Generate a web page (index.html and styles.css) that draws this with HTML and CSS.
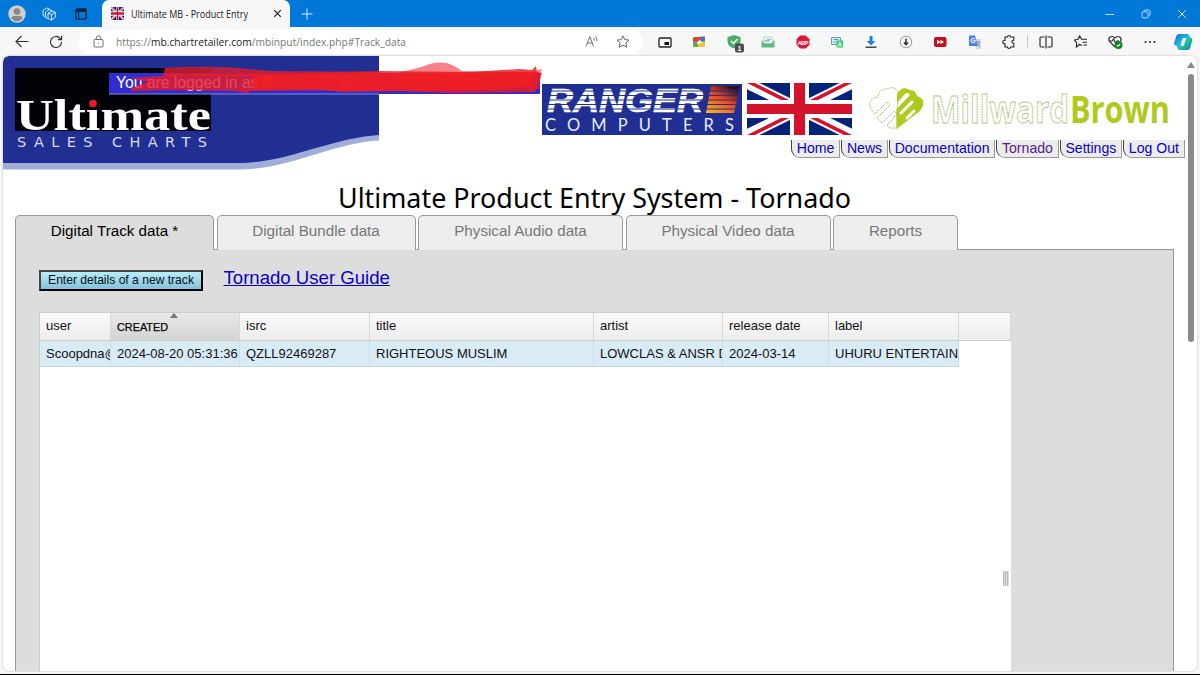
FILE: index.html
```html
<!DOCTYPE html>
<html lang="en">
<head>
<meta charset="utf-8">
<title>Ultimate MB - Product Entry</title>
<link rel="stylesheet" href="styles.css">
</head>
<body>
<svg class="defs" width="0" height="0">
  <defs>
    <symbol id="flag" viewBox="0 0 105 52" preserveAspectRatio="none">
      <path fill="#012379" d="M0 0h105v52H0z"/>
      <path stroke="#fff" stroke-width="11" d="M0 0 105 52M105 0 0 52"/>
      <path fill="#d3122d" d="M0 0l35 17.5h8L8 0zM105 0 70 17.500h-8L97 0zM105 52 70 34.500h-8L97 52zM0 52l35-17.500h8L8 52z"/>
      <path fill="#fff" d="M43 0h19v52H43zM0 17h105v18H0z"/>
      <path fill="#d3122d" d="M47 0h11v52H47zM0 21h105v10H0z"/>
    </symbol>
    <linearGradient id="flame" x1="0" y1="1" x2="0.700" y2="0"><stop offset="0" stop-color="#ffc01e"/><stop offset=".6" stop-color="#e8441f"/><stop offset="1" stop-color="#2a1020"/></linearGradient>
    <linearGradient id="cop" x1="0" y1="0" x2="1" y2="1"><stop offset="0" stop-color="#1766c9"/><stop offset=".45" stop-color="#27b5e8"/><stop offset=".6" stop-color="#21c58b"/><stop offset="1" stop-color="#1473d0"/></linearGradient>
  </defs>
</svg>

<header class="titlebar">
  <div class="titlebar-left">
    <svg width="18" height="18" viewBox="0 0 18 18"><circle cx="9" cy="9" r="8.700" fill="#d2d0ce"/><circle cx="9" cy="6.500" r="3.300" fill="#8a8886"/><path d="M3.500 13.500q0-2.500 2.500-2.500h6q2.500 0 2.500 2.500-2.200 2.700-5.500 2.700t-5.500-2.700z" fill="#8a8886"/></svg>
    <svg width="14" height="14" viewBox="0 0 14 14" fill="none" stroke="#d9ecff" stroke-width="1"><path d="M1 3.500 4.500 1l3 1M1 3.500v5l2 1M3.500 5 7 2.500l3 1M3.500 5v5.500l2 1M6 6.200 10 4l3.300 1.300v5L9.500 13 6 11.500zL9.500 7.500 13.300 5.300M9.500 7.500V13"/></svg>
    <svg width="12" height="12" viewBox="0 0 12 12"><rect x=".8" y=".8" width="10.400" height="10.400" rx="1.500" fill="none" stroke="#06233f" stroke-width="1.300"/><path d="M1 1h10v3H1zM3.200 4h1v7h-1z" fill="#06233f"/></svg>
  </div>
  <div class="browser-tab">
    <svg class="tab-flag" width="13" height="13"><use href="#flag" width="13" height="13"/></svg>
    <svg class="tab-title" width="118" height="18"><text x="0" y="12.500" textLength="117" lengthAdjust="spacingAndGlyphs">Ultimate MB - Product Entry</text></svg>
    <svg width="9" height="9" viewBox="0 0 9 9" stroke="#222" stroke-width="1.200"><path d="M1.200 1.200l6.600 6.600M7.800 1.200 1.200 7.800"/></svg>
  </div>
  <svg class="new-tab" width="12" height="12" viewBox="0 0 12 12" stroke="#d5eaff" stroke-width="1"><path d="M6 .5v11M.5 6h11"/></svg>
  <div class="window-buttons">
    <svg width="10" height="10" viewBox="0 0 10 10" stroke="#c4e2fb"><path d="M.5 5.500h8.500"/></svg>
    <svg width="10" height="10" viewBox="0 0 10 10" fill="none" stroke="#c4e2fb" stroke-width=".9"><rect x="1" y="2.800" width="6" height="6" rx="1"/><path d="M3 2.500V2q0-1 1-1h3.500q1.500 0 1.500 1.500V6q0 1-1.200 1"/></svg>
    <svg width="10" height="10" viewBox="0 0 10 10" stroke="#d5eaff"><path d="M1 1l8 8M9 1 1 9"/></svg>
  </div>
</header>

<div class="toolbar">
  <div class="nav-icons">
    <svg width="14" height="13" viewBox="0 0 14 13" fill="none" stroke="#333" stroke-width="1.100"><path d="M13.500 6.500H1M6.500 1 1 6.500 6.500 12"/></svg>
    <svg width="14" height="14" viewBox="0 0 14 14" fill="none" stroke="#333" stroke-width="1.200"><path d="M12.500 7A5.500 5.500 0 1 1 11 3.200L12.500 4.500M12.600.8v3.800H8.800"/></svg>
  </div>
  <div class="address">
    <svg width="11" height="13" viewBox="0 0 11 13" fill="none" stroke="#707070"><rect x="1" y="4.500" width="9" height="7.500" rx="1"/><path d="M3.200 4.500V3Q3.200.8 5.500.8T7.800 3v1.500"/><circle cx="5.500" cy="8.200" r=".6" fill="#707070" stroke="none"/></svg>
    <svg class="url" width="291" height="20"><text x="0" y="13.500" textLength="290" lengthAdjust="spacingAndGlyphs">https://<tspan class="host">mb.chartretailer.com</tspan>/mbinput/index.php#Track_data</text></svg>
    <svg class="read" width="14" height="13" viewBox="0 0 14 13" fill="none" stroke="#707070"><path d="M1 11.500 4.800 1.500 8.600 11.500M2.400 8h4.800M8.500 3q1 1 .8 2.500M10.300 1.500q1.800 1.500 1.500 4.500"/></svg>
    <svg width="14" height="13" viewBox="0 0 14 13" fill="none" stroke="#666"><path d="M7 .8 8.800 4.600 13 5.100 9.900 8l.8 4.200L7 10.200l-3.700 2L4.100 8 1 5.100l4.200-.5z"/></svg>
  </div>
  <div class="extensions">
    <svg viewBox="0 0 16 16"><rect x="2" y="4" width="12" height="9" rx="1" fill="none" stroke="#222" stroke-width="1.300"/><path fill="#111" d="M7.500 8h4.500v3H7.500z"/></svg>
    <svg viewBox="0 0 16 16"><path fill="#df4038" d="M3.500 3H10v5H2V4.500Q2 3 3.500 3z"/><path fill="#62a94d" d="M2 7.500h5V13H3.500Q2 13 2 11.500z"/><path fill="#f1bd31" d="M7 7h7v4.500q0 1.500-1.500 1.500H7z"/><path fill="#4775ce" d="M9.500 2.500H14V7.500H9.500z"/><path fill="#fff" d="M5.500 9 9.500 5.500v2.500h3.500L8 10z"/></svg>
    <svg viewBox="0 0 16 16"><path fill="#4dac6d" d="M8 1l6.500 2v4.500q0 4.500-6.500 7-6.500-2.500-6.500-7V3z"/><path d="M5 7l2.500 2.500L11.500 5" fill="none" stroke="#fff" stroke-width="1.400"/><rect x="9" y="9.500" width="9" height="9" rx="2" fill="#4c4c4c"/><text class="badge-text" x="11.500" y="17">1</text></svg>
    <svg viewBox="0 0 16 16"><path fill="#e6f3eb" stroke="#9ed0b0" stroke-width=".6" d="M3.500 3h9v7h-9z"/><path fill="#5cb780" d="M1.500 6l3 3.500h7l3-3.500v7.500h-13z"/><path d="M4.500 6l1.500 1.500L8.500 5M7.500 7.500 10.500 5" fill="none" stroke="#518dcb"/></svg>
    <svg viewBox="0 0 16 16"><path fill="#df1736" d="M5.200 1.500h5.600l3.700 3.700v5.600l-3.700 3.700H5.200l-3.700-3.700V5.200z"/><text class="abp-text" x="2.500" y="10.500" textLength="11">ABP</text></svg>
    <svg viewBox="0 0 16 16"><path d="M2.500 3.500h9v7h-9zM4.500 5.500h5M4.500 8h3" fill="#dceaf4" stroke="#5c9bd0"/><path fill="#3cc96f" d="M7.500 6.500H14V13.500H7.500z"/><path d="M9 12.500 10.800 8l1.800 4.500M9.500 11.200h2.600" fill="none" stroke="#fff" stroke-width=".8"/></svg>
    <svg viewBox="0 0 16 16"><path fill="#1784e8" d="M6.500 2h3v5h3L8 11.500 3.500 7h3z"/><path stroke="#333" stroke-width="1.400" d="M2.500 13.200h11"/></svg>
    <svg viewBox="0 0 16 16" fill="none"><circle cx="8" cy="8" r="5.800" stroke="#999"/><path d="M8 4.500v5.500M6 8.500l2 2.200 2-2.200" stroke="#333" stroke-width="1.500"/></svg>
    <svg viewBox="0 0 16 16"><rect x="2" y="3" width="12.500" height="10" rx="2" fill="#c90c1d"/><path fill="#fff" d="M5 5.800 8.500 8 5 10.200zM8.500 5.800 12 8l-3.500 2.200z"/></svg>
    <svg viewBox="0 0 16 16"><path fill="#d3d8df" d="M7 5h7v10H9z"/><path fill="#4b84e5" d="M2 1.500h6L11 12H2z"/><text class="g-text" x="3.200" y="9">G</text><path d="M9.500 8H13M11.500 7v1M12.500 8q-.5 2.500-2 4M10 9.500l3 2.500" fill="none" stroke="#7a8798" stroke-width=".8"/></svg>
    <svg viewBox="0 0 16 16" fill="none" stroke="#222" stroke-width="1.100"><path d="M4 3h2.500q0-1.500 1.500-1.500T9.500 3h3.300v3.200q-2 0-2 1.500t2 1.500v3.800H9.500Q9.500 14.500 8 14.500T6.500 13H4V9.800q-2.200 0-2.200-1.800T4 6.300z"/></svg>
  </div>
  <i class="divider"></i>
  <div class="browser-tools">
    <svg viewBox="0 0 16 16" fill="none" stroke="#222" stroke-width="1.100"><path d="M6.500 3H3.200Q2 3 2 4.200v7.600Q2 13 3.200 13h3.300M9.500 3h3.300Q14 3 14 4.200v7.600Q14 13 12.800 13H9.500M8 1.500v13"/></svg>
    <svg viewBox="0 0 16 16" fill="none" stroke="#222" stroke-width="1.100"><path d="M9 11.500 6.500 10.500 3.300 13l.4-4L1.500 6l3.500-.7L6.700 2l1.800 3.300h5.500M9.500 8.200H14M10.500 11H14"/></svg>
    <svg viewBox="0 0 16 16" fill="none" stroke="#222" stroke-width="1.100"><path d="M8 13 2.500 7.500Q1 5 2.800 3.200 5.500 1.500 8 4q2.500-2.500 5-.8Q15 5 13.500 7.500M2 7h3l1.500-2 2 4 1.500-2h2"/><circle cx="11.500" cy="11" r="4" fill="#108018" stroke="none"/><path d="M9.800 11l1.300 1.300 2.200-2.500" stroke="#fff"/></svg>
    <svg viewBox="0 0 16 16" fill="#222"><circle cx="3.500" cy="8" r="1"/><circle cx="8" cy="8" r="1"/><circle cx="12.500" cy="8" r="1"/></svg>
    <svg class="copilot" viewBox="0 0 20 18"><path fill="url(#cop)" d="M6 1h8q2 0 2.500 2l.5 1.500q2.500.2 2.200 3L17.500 14q-.7 3-3.200 3H7q-2 0-2.500-2L4 13q-3-.3-3-3L3 4q.7-3 3-3z"/><path fill="#f4fbff" d="M10.500 5h2.800L11 12q-.3 1-1.500 1H7.500l1.800-6.500q.3-1.500 1.200-1.500z"/></svg>
  </div>
</div>

<div class="window">
 <main class="page">
  <div class="site-header">
    <div class="banner">
      <svg width="541" height="116" viewBox="3 56 541 116">
        <path fill="#a1add9" d="M3 100h376v40.500c-44 2-91 29-139 29H3z"/>
        <path fill="#202f91" d="M3 62q0-6 6-6h370v79c-48 3-93 28-139 28H3z"/>
        <path fill="#010308" d="M15 68h196v63H15z"/>
        <text class="brand" x="16" y="130" textLength="195" lengthAdjust="spacingAndGlyphs">Ultimate</text>
        <circle cx="93" cy="103.500" r="6.500" fill="#010308"/><circle cx="93" cy="103.500" r="3.800" fill="#ee1c25"/>
        <text class="brand-sub" x="17" y="146.500" textLength="190">SALES CHARTS</text>
        <path fill="#312bd0" d="M109 73h431v21H109z"/><path fill="#8090d4" d="M109 93.500h270v1H109z"/>
        <text class="login" x="116" y="87.500">You are logged in as S</text>
        <text class="login" x="339" y="87.500">@</text>
        <path fill="#ed1c24" opacity=".55" d="M400 72q20-4 30-8 14-4 26 3l6 4 68 1 12-3-2 5v15H400z"/>
        <path fill="#d41f35" opacity=".85" d="M165 68q48-3 84 1l25 2 105 1v4H163z"/>
        <path fill="#e81c27" opacity=".82" d="M163 76l4-2 83 0 130-3 90 1 50-3 12 1 4-4 1 6 5 1-4 14-3 5-85 1-50-2-44-1-106 1-2 2-14-2-70-1-28 1q-6 1-5-3 12-4 16-6l-17-4z"/>
        <path fill="#f01e25" opacity=".85" d="M255 75l245-3 34 0-2 15-40 3-90 1-60 1-30-3-60 1z"/>
      </svg>
    </div>
    <div class="header-right">
      <div class="logos">
        <svg class="ranger" width="200" height="51" viewBox="542 84 200 51">
          <path fill="#202f91" d="M542 84h200v51H542z"/>
          <text class="ranger-text" x="547" y="112" textLength="156" lengthAdjust="spacingAndGlyphs">RANGER</text>
          <path fill="url(#flame)" d="M711 86h29l-6 27h-28z"/>
          <path stroke="#202f91" stroke-width="1.200" d="M545 91h196M545 95.500h196M545 100h196M545 104.500h196M545 109h196"/>
          <text class="computers" x="545" y="130.500" textLength="189">COMPUTERS</text>
        </svg>
        <svg class="flag" width="105" height="52"><use href="#flag" width="105" height="52"/></svg>
        <svg class="millward" width="304" height="50" viewBox="868 84 304 50">
          <path fill="#fff" stroke="#a6bd70" stroke-dasharray="2 1" d="M890 128l-3-3 10-11-3-3-12 12-5-5 13-13-3-3-12 12q-6-6-5-11 2-6 8-6 1-8 9-8 8-4 12 5l-2 15v19z"/>
          <path fill="#b0c91d" d="M896.500 129V109L910 95q-3-4-6 0l-7 8v-9q5-9 13-4 6 0 7 6 8 2 6 10l-3 5z"/>
          <path fill="none" stroke="#fff" stroke-width="3" stroke-linecap="round" d="M901 113l11-11M907 118l7-7"/>
          <text class="mill" x="931" y="122.500" textLength="138" lengthAdjust="spacingAndGlyphs">Millward</text>
          <text class="brown" x="1070" y="122.500" textLength="100" lengthAdjust="spacingAndGlyphs">Brown</text>
        </svg>
      </div>
      <nav class="site-nav">
        <a>Home</a><a>News</a><a>Documentation</a><a class="visited">Tornado</a><a>Settings</a><a>Log Out</a>
      </nav>
    </div>
  </div>
  <h1 class="page-title"><svg width="514" height="44"><text x="0" y="36" textLength="513" lengthAdjust="spacingAndGlyphs">Ultimate Product Entry System - Tornado</text></svg></h1>
  <div class="tabs">
    <div class="tab active">Digital Track data *</div>
    <div class="tab">Digital Bundle data</div>
    <div class="tab">Physical Audio data</div>
    <div class="tab">Physical Video data</div>
    <div class="tab">Reports</div>
  </div>
  <section class="panel">
    <div class="actions"><button class="new-track">Enter details of a new track</button><a class="guide">Tornado User Guide</a></div>
    <div class="table">
      <div class="row head">
        <div>user</div><div class="sorted"><svg width="52" height="27"><text x="0" y="17.500" textLength="51" lengthAdjust="spacingAndGlyphs">CREATED</text></svg><i class="sort-arrow"></i></div><div>isrc</div><div>title</div><div>artist</div><div>release date</div><div>label</div><div></div>
      </div>
      <div class="row data">
        <div>Scoopdna@</div><div>2024-08-20 05:31:36</div><div>QZLL92469287</div><div>RIGHTEOUS MUSLIM</div><div>LOWCLAS &amp; ANSR D</div><div>2024-03-14</div><div>UHURU ENTERTAINMENT</div>
      </div>
      <i class="grip"></i>
    </div>
  </section>
 </main>
 <div class="scrollbar"><i class="up"></i><i class="thumb"></i></div>
</div>
</body>
</html>
```
FILE: styles.css
```css
* { box-sizing: border-box; }
body { margin: 0; width: 1200px; height: 675px; overflow: hidden; display: flex; flex-direction: column; background: #f7f7f7; font-family: "Liberation Sans", Arial, sans-serif; border-bottom: 1px solid #000; }
svg { display: block; flex: none; overflow: visible; }
.defs { position: absolute; }

/* Browser chrome */
.titlebar { height: 27px; flex: none; display: flex; align-items: center; background: #0078d7; }
.titlebar-left { width: 102px; display: flex; align-items: center; padding-left: 8px; gap: 16px; }
.titlebar-left svg:last-child { margin-left: 3px; }
.browser-tab { width: 188px; height: 27px; display: flex; align-items: center; padding-left: 9px; background: #f7f7f7; border-radius: 7px 7px 0 0; }
.tab-title { margin: 0 24px 0 7px; font: 10px "Open Sans", sans-serif; fill: #222; }
.new-tab { margin-left: 11px; }
.window-buttons { margin-left: auto; display: flex; gap: 26px; padding-right: 13px; }
.toolbar { height: 29px; flex: none; display: flex; align-items: center; background: #f7f7f7; }
.nav-icons { width: 78px; display: flex; gap: 20px; padding-left: 15px; align-items: center; }
.address { width: 565px; height: 24px; border-radius: 12px; background: #fff; display: flex; align-items: center; padding: 0 13px 0 15px; }
.url { margin: 0 auto 0 12px; font: 11px "Open Sans", sans-serif; fill: #777; }
.host { fill: #222; }
.read { margin-right: 17px; }
.extensions { display: flex; margin-left: 14px; gap: 18.400px; }
.extensions svg, .browser-tools svg { width: 16px; height: 16px; }
.badge-text { font: bold 7px "Liberation Sans", sans-serif; fill: #fff; }
.abp-text { font: bold 6px "Liberation Sans", sans-serif; fill: #fff; }
.g-text { font: bold 7px "Liberation Sans", sans-serif; fill: #fff; }
.divider { width: 1px; height: 13px; margin-left: 10px; background: #c8c8c8; }
.browser-tools { display: flex; align-items: center; margin-left: 10px; gap: 18.700px; }
.browser-tools .copilot { width: 20px; height: 18px; margin-left: -4px; }

/* Browser viewport */
.window { flex: none; width: 1194px; height: 615px; margin-left: 3px; display: flex; overflow: hidden; background: #fff; border-radius: 6px; box-shadow: 0 0 1px 1px #ddd; }
.page { width: 1182px; }
.site-header { height: 122px; display: flex; }
.banner { width: 539px; flex: none; }
.header-right { width: 645px; flex: none; padding-top: 27px; }
.logos { height: 57px; display: flex; align-items: flex-start; }
.ranger { margin-top: 1px; }
.flag { margin-left: 5px; }
.millward { margin: 1px 0 0 16px; }
.brand { font: bold 44px "Liberation Serif", serif; fill: #fff; }
.brand-sub { font: 14.500px "DejaVu Sans", sans-serif; fill: #d6dcf3; }
.login { font: 15.700px "Liberation Sans", sans-serif; fill: #fff; }
.ranger-text { font: italic bold 34px "Liberation Sans", sans-serif; fill: #fff; stroke: #fff; stroke-width: .6px; }
.computers { font: 16.500px Lato, sans-serif; fill: #e8ecff; }
.mill { font: bold 37px "Open Sans", sans-serif; fill: #fff; stroke: #a0b868; stroke-width: .9px; stroke-dasharray: 2 .6; }
.brown { font: bold 37px "Open Sans", sans-serif; fill: #b0c91d; }
.site-nav { display: flex; justify-content: flex-end; padding-right: 2px; gap: 1px; font-size: 14.100px; color: #0a00c4; }
.site-nav a { height: 18px; line-height: 17px; padding: 0 5px 0 4.500px; background: #ececec; border: solid #999; border-width: 0 1px 1px 0; border-left: 1px solid #444; border-bottom-left-radius: 9px; white-space: nowrap; }
.site-nav .visited { color: #551a8b; }
.page-title { margin: 0; height: 37px; display: flex; justify-content: center; font: 26.500px "Noto Sans", sans-serif; }
.page-title svg { margin: -6px 0 0 1px; }

/* Tabs and data panel */
.tabs { height: 34px; display: grid; grid-template-columns: 199px 199px 205px 205px 125px; gap: 2.500px; margin-left: 12px; }
.tab { padding-top: 6px; line-height: 18px; text-align: center; font-size: 15.200px; color: #777; background: #eee; border: 1px solid #999; border-bottom: 0; border-radius: 5px 5px 0 0; white-space: nowrap; }
.tab.active { color: #000; background: #ddd; height: 35px; z-index: 1; }
.panel { width: 1159px; height: 430px; margin-left: 12px; padding: 13px 0 0 23px; background: #ddd; border: 1px solid #999; }
.actions { display: flex; gap: 20.500px; height: 49px; }
.new-track { width: 164px; height: 21px; margin-top: 7px; padding: 0; font: 12.100px/17px "Liberation Sans", sans-serif; white-space: nowrap; color: #021018; border: 2px outset #333; border-color: #444 #111 #111 #444; background: linear-gradient(#b9edf9, #85bfda); }
.guide { font-size: 18.600px; line-height: 29px; color: #0a00c4; text-decoration: underline; }
.table { position: relative; width: 972px; height: 365px; background: #fff; border-left: 1px solid #ccc; border-top: 1px solid #ccc; font-size: 13px; color: #111; }
.row { display: grid; grid-template-columns: 71px 129px 130px 224px 129px 106px 130px 52px; }
.row > div { overflow: hidden; white-space: nowrap; padding-left: 6px; line-height: 26px; border-right: 1px solid #d8d8d8; }
.head > div { height: 27px; background: linear-gradient(#fafafa, #ededed); }
.head { border-bottom: 1px solid #ccc; }
.head > .sorted { position: relative; font-size: 10.200px; background: linear-gradient(#e8e8e8, #d5d5d5); }
.sorted text { stroke: #111; stroke-width: .25px; }
.sort-arrow { position: absolute; top: 0; left: 59px; border: 4px solid transparent; border-top: 0; border-bottom: 5px solid #777; }
.data > div { height: 26px; background: #d9ebf5; border-right-color: #cbdde7; border-bottom: 1px solid #c7d5dd; }
.grip { position: absolute; right: 2px; top: 258px; width: 6px; height: 15px; background: repeating-linear-gradient(90deg, #bbb 0 1px, #ddd 1px 2px); }
.scrollbar { width: 12px; display: flex; flex-direction: column; align-items: center; padding-top: 6px; gap: 6px; }
.up { border: 4px solid transparent; border-top: 0; border-bottom: 6px solid #888; }
.thumb { width: 6px; height: 268px; border-radius: 3px; background: #8a8a8a; }
```
